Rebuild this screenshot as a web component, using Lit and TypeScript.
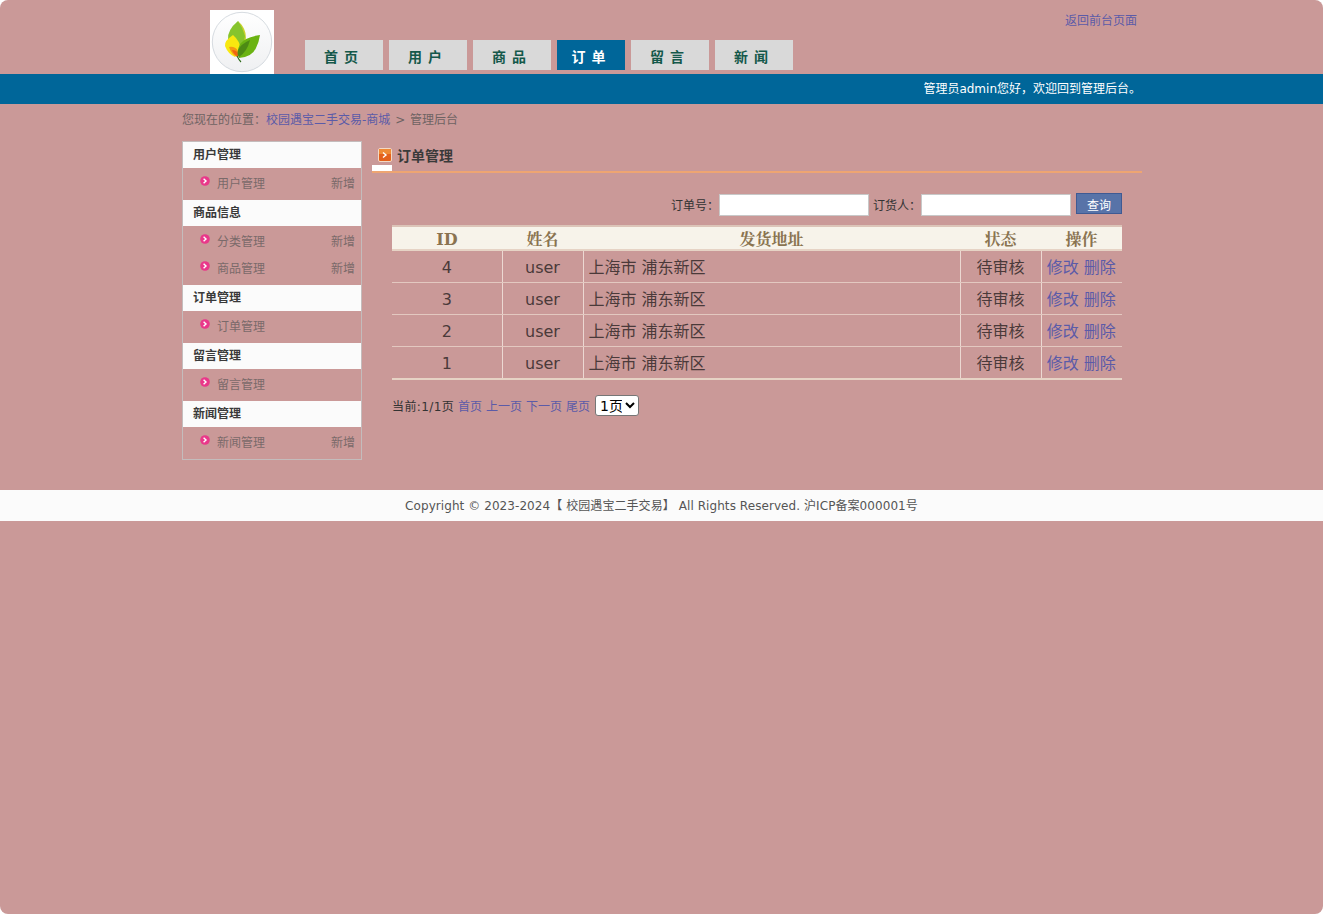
import { LitElement, html, css, svg } from "lit";
import { customElement } from "lit/decorators.js";

const NAV = [
  { t: "首 页", w: 78 },
  { t: "用 户", w: 78 },
  { t: "商 品", w: 78 },
  { t: "订 单", w: 68, on: true },
  { t: "留 言", w: 78 },
  { t: "新 闻", w: 78 },
];

const SIDE = [
  { h: "用户管理", items: [{ n: "用户管理", add: true }] },
  { h: "商品信息", items: [{ n: "分类管理", add: true }, { n: "商品管理", add: true }] },
  { h: "订单管理", items: [{ n: "订单管理", add: false }] },
  { h: "留言管理", items: [{ n: "留言管理", add: false }] },
  { h: "新闻管理", items: [{ n: "新闻管理", add: true }] },
];

const ROWS = [4, 3, 2, 1];

const logo = svg`<svg class="logo-svg" viewBox="0 0 64 64" width="64" height="64">
  <rect width="64" height="64" fill="#fff"/>
  <defs><linearGradient id="cg" x1="0" y1="0" x2="0" y2="1"><stop offset="0" stop-color="#fff"/><stop offset="1" stop-color="#eff0f2"/></linearGradient></defs>
  <circle cx="32" cy="32" r="29.7" fill="url(#cg)" stroke="#ccd2d8" stroke-width="0.8"/>
  <path d="M28 11 Q36 18 36 28 Q35 34 31 38Z" fill="#c9d22c"/>
  <path d="M28 11 Q17 20 18 30 Q20 38 27 42 Q34 36 35 26 Q33 18 28 11Z" fill="#86c42d"/>
  <path d="M23 25 Q14 31 15 36 Q18 44 25 47 L31 40 Q30 31 23 25Z" fill="#f8e810"/>
  <path d="M19 37 Q25 36 28 41 L28 47 Q22 46 19 37Z" fill="#f39a12"/>
  <path d="M22 40 Q26 40 28 43 L28 47 Q24 45 22 40Z" fill="#f0630f"/>
  <path d="M50 25 Q35 27 30 34 Q26 42 29 48 Q42 47 46 38 Q49 32 50 25Z" fill="#6bb313"/>
  <path d="M40 30 Q31 34 28 40 Q27 45 29 47 Q37 42 40 30Z" fill="#4d8a14"/>
  <path d="M27 46 Q29 50 31 52" fill="none" stroke="#2f6b1c" stroke-width="1.1"/>
</svg>`;

const titleIcon = svg`<svg viewBox="0 0 14 14" width="14" height="14" class="t-icon">
  <rect x="0.5" y="0.5" width="13" height="13" rx="1.5" fill="#e4611c" stroke="#f3d9c4"/>
  <path d="M1 2 a1 1 0 0 1 1-1 h10 a1 1 0 0 1 1 1 v4 h-12Z" fill="#ef8a35"/>
  <path d="M5 4.5 L8 7 L5 9.5" fill="none" stroke="#fff" stroke-width="1.4"/>
</svg>`;

const bullet = svg`<svg viewBox="0 0 10 10" width="10" height="10" class="bullet">
  <circle cx="5" cy="5" r="4.8" fill="#e9388a"/>
  <path d="M3.6 2.8 L6 5 L3.6 7.2" fill="none" stroke="#fff" stroke-width="1.4"/>
</svg>`;

@customElement("app-root")
export class AppRoot extends LitElement {
  static styles = css`
    :host {
      display: block;
      background: #fff;
      font-family: "DejaVu Sans", "Noto Sans CJK SC", sans-serif;
      font-size: 12px;
      color: #333;
    }
    a { color: #5b5ba8; text-decoration: none; }
    .page {
      min-height: 914px;
      background: #ca9998;
      border-radius: 8px;
      overflow: hidden;
    }
    .wrap { width: 960px; margin: 0 auto; position: relative; left: 0.5px; }
    .head { height: 74px; display: flex; position: relative; }
    .logo { margin: 10px 0 0 28px; width: 64px; height: 64px; }
    .logo-svg { display: block; }
    .nav { display: flex; gap: 6px; margin: 40px 0 0 31px; height: 30px; }
    .tab {
      box-sizing: border-box;
      height: 30px;
      padding-right: 6px;
      line-height: 33px;
      background: #d9d9d9;
      color: #14584a;
      font-weight: bold;
      font-size: 14px;
      text-align: center;
      font-family: "Noto Sans CJK SC", sans-serif;
      word-spacing: 3px;
    }
    .tab.on { background: #006699; color: #fff; padding-right: 5px; }
    .back { position: absolute; right: 5px; top: 13px; line-height: 16px; }
    .bar {
      height: 30px;
      background: #006699;
      color: #fff;
      line-height: 30px;
    }
    .bar .wrap { text-align: right; padding-right: 1px; box-sizing: border-box; }
    .crumb { height: 37px; line-height: 32px; color: #6e6363; }
    .crumb .sep { margin: 0 1px; }
    .body { display: flex; gap: 10px; height: 349px; align-items: flex-start; }
    .side {
      width: 180px;
      box-sizing: border-box;
      border: 1px solid #c4bcbc;
    }
    .side h3 {
      margin: 0;
      height: 26px;
      line-height: 26px;
      padding-left: 10px;
      background: #fbfbfb;
      font-size: 12px;
      font-weight: bold;
      color: #3a3a3a;
    }
    .items { padding: 1px 0 4px; }
    .item {
      height: 27px;
      display: flex;
      align-items: center;
      color: #7a6a6a;
      padding: 0 6px 0 17px;
    }
    .bullet { display: block; margin: -3px 7px 0 0; }
    .item .n { flex: 1; }
    .main { width: 770px; }
    .title {
      height: 30px;
      border-bottom: 2px solid #eea572;
      position: relative;
      display: flex;
      align-items: flex-start;
    }
    .title::after {
      content: "";
      position: absolute;
      left: 0;
      bottom: 0;
      width: 20px;
      height: 6px;
      background: #fff;
    }
    .t-icon { display: block; margin: 7px 5px 0 6px; }
    .title b { font-size: 14px; line-height: 30px; color: #3a3a3a; }
    .search {
      display: flex;
      justify-content: flex-end;
      align-items: center;
      height: 24px;
      margin: 19px 20px 0 0;
      color: #333;
    }
    .search input {
      box-sizing: border-box;
      width: 150px;
      height: 22px;
      margin: 1px 4px 0 0;
      border: 1px solid #c8c8c8;
      background: #fff;
      padding: 0;
    }
    .search .second { margin-right: 5px; }
    .search button {
      box-sizing: border-box;
      width: 46px;
      height: 21px;
      margin-top: -1px;
      padding: 1px 0 0;
      background: #5873a8;
      border: 1px solid #3f5a93;
      color: #fff;
      font: inherit;
    }
    table {
      width: 730px;
      margin: 9px 0 0 20px;
      border-collapse: collapse;
      table-layout: fixed;
      font-size: 16px;
      color: #4a3a3a;
    }
    th {
      box-sizing: border-box;
      height: 24px;
      padding: 3px 0 0;
      background: #f7f3ea;
      color: #8a7350;
      border-top: 2px solid #dcc4b8;
      border-bottom: 2px solid #e6d3c5;
      font-family: "DejaVu Serif", "Noto Serif CJK SC", "Noto Sans CJK SC", serif;
      font-size: 16px;
      font-weight: bold;
      line-height: 19px;
    }
    td {
      box-sizing: border-box;
      height: 32px;
      padding: 0;
      text-align: center;
      border-bottom: 1px solid #e3c8c0;
      border-right: 1px solid #ecd8d2;
    }
    td.latin { padding: 2px 0 0; }
    td:last-child { border-right: 0; padding-right: 1px; }
    td.addr { text-align: left; padding-left: 5px; }
    td a { color: #5b5ba8; }
    tbody tr:last-child td { border-bottom: 2px solid #e6d3c5; height: 33px; padding-bottom: 1px; }
    tbody tr:last-child td.latin { padding-bottom: 0; }
    .pager {
      display: flex;
      align-items: center;
      gap: 4px;
      margin: 15px 0 0 20px;
      color: #333;
    }
    .pager .cur { width: 62px; letter-spacing: 0.4px; white-space: nowrap; }
    .pager select {
      font-family: inherit;
      font-size: 14px;
      height: 21px;
      width: 44px;
      margin-left: 1px;
      background: #fff;
      color: #000;
      border: 1px solid #767676;
      border-radius: 3px;
    }
    .foot {
      height: 31px;
      line-height: 33px;
      overflow: hidden;
      background: #fbfbfb;
      text-align: center;
      color: #555;
      letter-spacing: 0.07px;
    }
  `;

  render() {
    return html`
      <div class="page">
        <div class="wrap head">
          <div class="logo">${logo}</div>
          <div class="nav">
            ${NAV.map(
              (n) => html`<div class="tab ${n.on ? "on" : ""}" style="width:${n.w}px">${n.t}</div>`
            )}
          </div>
          <a class="back" href="#">返回前台页面</a>
        </div>
        <div class="bar"><div class="wrap">管理员admin您好，欢迎回到管理后台。</div></div>
        <div class="wrap crumb">
          您现在的位置：<a href="#">校园遇宝二手交易-商城</a> <span class="sep">&gt;</span> 管理后台
        </div>
        <div class="wrap body">
          <div class="side">
            ${SIDE.map(
              (g) => html`
                <h3>${g.h}</h3>
                <div class="items">
                  ${g.items.map(
                    (i) => html`<div class="item">
                      ${bullet}<span class="n">${i.n}</span>${i.add ? html`<span>新增</span>` : ""}
                    </div>`
                  )}
                </div>
              `
            )}
          </div>
          <div class="main">
            <div class="title">${titleIcon}<b>订单管理</b></div>
            <div class="search">
              <span>订单号：</span><input />
              <span>订货人：</span><input class="second" />
              <button>查询</button>
            </div>
            <table>
              <colgroup>
                <col style="width:110px" /><col style="width:81px" /><col style="width:377px" /><col style="width:81px" /><col style="width:81px" />
              </colgroup>
              <thead>
                <tr><th>ID</th><th>姓名</th><th>发货地址</th><th>状态</th><th>操作</th></tr>
              </thead>
              <tbody>
                ${ROWS.map(
                  (r) => html`<tr>
                    <td class="latin">${r}</td>
                    <td class="latin">user</td>
                    <td class="addr">上海市 浦东新区</td>
                    <td>待审核</td>
                    <td><a href="#">修改</a> <a href="#">删除</a></td>
                  </tr>`
                )}
              </tbody>
            </table>
            <div class="pager">
              <span class="cur">当前:1/1页</span>
              <a href="#">首页</a><a href="#">上一页</a><a href="#">下一页</a><a href="#">尾页</a>
              <select><option>1页</option></select>
            </div>
          </div>
        </div>
        <div class="foot">Copyright © 2023-2024【 校园遇宝二手交易】 All Rights Reserved. 沪ICP备案000001号</div>
      </div>
    `;
  }
}
